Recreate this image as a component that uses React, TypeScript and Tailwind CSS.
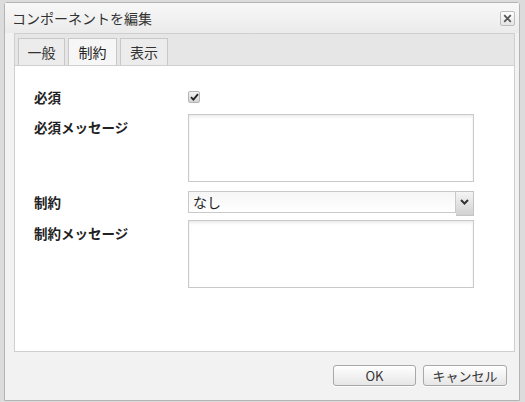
import React from "react";

const jp = { fontFamily: '"Noto Sans CJK JP", "Noto Sans", sans-serif' };

function Checkbox() {
  return (
    <div className="flex h-[12px] w-[12px] items-center justify-center rounded-[2px] border border-[#b5b5b5] bg-gradient-to-b from-[#f4f4f4] to-[#d4d4d4]">
      <svg width="9" height="8" viewBox="0 0 9 8">
        <path d="M1 4.2 L3.4 6.6 L8 1.2" fill="none" stroke="#222" strokeWidth="1.8" />
      </svg>
    </div>
  );
}

function TextBox() {
  return (
    <div className="h-[68px] w-[286px] border border-[#c9c9c9] bg-white shadow-[inset_0_2px_3px_rgba(0,0,0,0.08)]" />
  );
}

function Field({ label, children, labelTop = "pt-[5px]" }: { label: string; children: React.ReactNode; labelTop?: string }) {
  return (
    <div className="flex">
      <div className={`w-[154px] shrink-0 text-[13.5px] font-bold leading-[16px] text-[#222] ${labelTop}`}>{label}</div>
      {children}
    </div>
  );
}

function Button({ children, width }: { children: React.ReactNode; width: string }) {
  return (
    <button
      className={`h-[21px] ${width} rounded-[3px] border border-[#a8a8a8] bg-gradient-to-b from-[#ffffff] to-[#e6e6e6] text-[13px] leading-none text-[#333] shadow-[0_1px_0_rgba(255,255,255,0.8)]`}
      style={jp}
    >
      {children}
    </button>
  );
}

export default function App() {
  const tabs = [
    { label: "一般", width: "w-[47px]", active: false },
    { label: "制約", width: "w-[49px]", active: true },
    { label: "表示", width: "w-[48px]", active: false },
  ];

  return (
    <div className="h-[402px] w-[525px] overflow-hidden bg-[#dcdcdc] pl-[4px] pt-[2px]" style={jp}>
      <div className="flex h-[399px] w-[516px] flex-col rounded-t-[3px] border border-[#b4b4b4] bg-[#f2f2f2]">
        {/* title bar */}
        <div className="flex h-[30px] items-center justify-between bg-gradient-to-b from-[#f8f8f8] to-[#ebebeb] pl-[7px] pr-[4px]">
          <span className="text-[14px] text-[#333]">コンポーネントを編集</span>
          <div className="flex h-[15px] w-[15px] items-center justify-center rounded-[2px] border border-[#bdbdbd] bg-gradient-to-b from-[#ffffff] to-[#e4e4e4]">
            <svg width="9" height="9" viewBox="0 0 9 9">
              <path d="M1.2 1.2 L7.8 7.8 M7.8 1.2 L1.2 7.8" stroke="#555" strokeWidth="1.8" />
            </svg>
          </div>
        </div>

        {/* tab panel */}
        <div className="pl-[9px] pr-[4px]">
          <div className="flex h-[32px] items-end gap-[3px] border border-b-0 border-[#cfcfcf] bg-[#e6e6e6] pl-[3px]">
            {tabs.map((tab) => (
              <div
                key={tab.label}
                className={`flex h-[27px] ${tab.width} items-center justify-center border border-b-0 border-[#c8c8c8] text-[14px] ${
                  tab.active ? "bg-[#f6f6f6] text-[#222]" : "bg-[#ececec] text-[#333]"
                }`}
              >
                {tab.label}
              </div>
            ))}
          </div>
          <div className="h-[287px] border border-[#cfcfcf] bg-white pl-[19px] pt-[24px]">
            <div className="flex flex-col">
              <div className="flex h-[14px] items-center">
                <div className="w-[154px] shrink-0 text-[13.5px] font-bold leading-[16px] text-[#222]">必須</div>
                <Checkbox />
              </div>
              <div className="mt-[10px]">
                <Field label="必須メッセージ">
                  <TextBox />
                </Field>
              </div>
              <div className="mt-[9px]">
                <Field label="制約" labelTop="pt-[3px]">
                  <div className="flex h-[25px] w-[286px]">
                    <div className="flex h-[22px] flex-1 items-center border border-[#c9c9c9] bg-gradient-to-b from-[#f6f6f6] to-[#ffffff] pl-[4px] text-[14px] text-[#222]">
                      なし
                    </div>
                    <div className="flex h-[25px] w-[18px] items-center justify-center border border-l-0 border-[#c4c4c4] bg-gradient-to-b from-[#f4f4f4] to-[#d2d2d2] pb-[3px]">
                      <svg width="9" height="6" viewBox="0 0 9 6">
                        <path d="M1 1 L4.5 4.5 L8 1" fill="none" stroke="#333" strokeWidth="2" />
                      </svg>
                    </div>
                  </div>
                </Field>
              </div>
              <div className="mt-[4px]">
                <Field label="制約メッセージ">
                  <TextBox />
                </Field>
              </div>
            </div>
          </div>
        </div>

        {/* footer */}
        <div className="flex flex-1 justify-end gap-[7px] pr-[12px] pt-[13px]">
          <Button width="w-[83px]">OK</Button>
          <Button width="w-[84px]">キャンセル</Button>
        </div>
      </div>
    </div>
  );
}
